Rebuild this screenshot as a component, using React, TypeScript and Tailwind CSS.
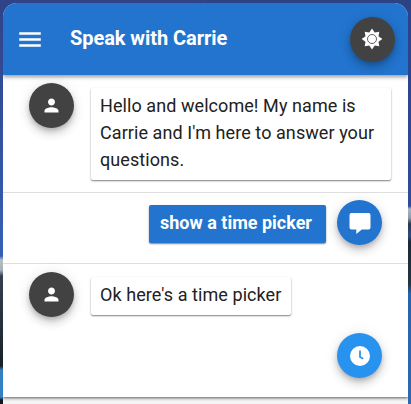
import React from "react";

type AvatarProps = { className: string; children: React.ReactNode };

function Avatar({ className, children }: AvatarProps) {
  return (
    <div
      className={`flex h-[45px] w-[45px] shrink-0 items-center justify-center rounded-full text-white shadow-[0_3px_5px_-1px_rgba(0,0,0,0.2),0_6px_10px_rgba(0,0,0,0.14),0_1px_14px_rgba(0,0,0,0.1)] ${className}`}
    >
      {children}
    </div>
  );
}

function MenuIcon() {
  return (
    <svg viewBox="0 0 22 16" className="h-4 w-[22px]" fill="currentColor">
      <path d="M0.200 1.300h21.600v2.400H0.200zM0.200 7.300h21.600v2.400H0.200zM0.200 13.300h21.600v2.400H0.200z" />
    </svg>
  );
}

function PersonIcon() {
  return (
    <svg viewBox="0 0 24 24" className="h-[21px] w-[21px]" fill="currentColor">
      <path d="M12 12c2.21 0 4-1.79 4-4s-1.79-4-4-4-4 1.79-4 4 1.79 4 4 4zm0 2c-2.67 0-8 1.34-8 4v2h16v-2c0-2.66-5.33-4-8-4z" />
    </svg>
  );
}

function SunIcon() {
  return (
    <svg viewBox="0 0 22 22" className="mr-px h-[22px] w-[22px]" fill="currentColor">
      <path d="M11 .6 13.7 4.500 18.3 3.700 17.500 8.300 21.400 11 17.500 13.700 18.300 18.300 13.700 17.500 11 21.400 8.300 17.500 3.700 18.300 4.500 13.700 .6 11 4.500 8.300 3.700 3.700 8.300 4.500Z" />
      <circle cx="11" cy="11" r="4.500" fill="none" stroke="#424242" strokeWidth="0.850" />
    </svg>
  );
}

function ChatIcon() {
  return (
    <svg viewBox="0 0 22 22" className="h-[22px] w-[22px]" fill="currentColor">
      <path d="M2.5 1h17Q21.500 1 21.500 3v12.500q0 2-2 2H12.800L7.300 22v-4.500H2.500q-2 0-2-2V3q0-2 2-2Z" />
    </svg>
  );
}

function ClockIcon() {
  return (
    <svg viewBox="0 0 20 20" className="h-5 w-5">
      <circle cx="10" cy="10" r="10" fill="white" />
      <path d="M10 4.500V11L13.200 12.800" fill="none" stroke="#2893ee" strokeWidth="1.800" />
    </svg>
  );
}

function Bubble({ className, children }: AvatarProps) {
  return (
    <div
      className={`rounded-[2px] text-[18px] leading-[27px] shadow-[0_1px_2px_rgba(0,0,0,0.4),0_1px_1px_rgba(0,0,0,0.14)] ${className}`}
    >
      {children}
    </div>
  );
}

export default function App() {
  return (
    <div className="flex h-[404px] w-[411px] overflow-hidden bg-[#304e91] bg-[linear-gradient(180deg,#304288_0px,#3560b5_256px,#b5bdc5_260px,#a8b0b8_270px,#35404e_276px,#18202b_366px,#3480c5_370px,#3480c5_397px,#15191f_400px),linear-gradient(180deg,#2b4285_0px,#2c4c99_206px,#a9b6c0_209px,#8c9cab_218px,#26384e_224px,#2e4b85_236px,#1b2936_242px,#233442_284px,#2864ad_294px,#2f67ad_404px)] bg-[length:50%_100%,50%_100%] bg-[position:left,right] bg-no-repeat px-[3px] pt-[3px] font-['Roboto',sans-serif] text-[#212121]">
      <main className="h-[401px] flex-1 overflow-hidden rounded-t-[14px] bg-[#f5f5f5]">
        <header className="relative flex h-[72px] items-center bg-[#2274ce] pr-[13px] pl-4 text-white shadow-[0_2px_4px_rgba(0,0,0,0.4)]">
          <button aria-label="Menu" className="w-[22px]"><MenuIcon /></button>
          <h1 className="ml-[29px] flex-1 pb-[2px] text-[20px] font-bold tracking-[-0.06px]">Speak with Carrie</h1>
          <Avatar className="bg-[#424242]"><SunIcon /></Avatar>
        </header>
        <div className="h-[322px] bg-white shadow-[0_1px_3px_rgba(0,0,0,0.65)]">
          <section className="flex h-[118px] items-start border-b border-[#dedede] pt-2 pl-[26px]">
            <Avatar className="bg-[#424242]"><PersonIcon /></Avatar>
            <Bubble className="mt-[5px] ml-[17px] h-[92px] w-[300px] bg-white pt-[4px] pl-[9px] tracking-[0.07px]">
              Hello and welcome! My name is Carrie and I'm here to answer your questions.
            </Bubble>
          </section>
          <section className="flex h-[71px] items-start justify-end border-b border-[#dedede] pt-[7px] pr-[26px]">
            <Bubble className="mt-[5px] mr-[11px] h-[38px] w-[177px] bg-[#2274ce] pt-[4px] pl-[11px] font-bold whitespace-nowrap text-white">
              show a time picker
            </Bubble>
            <Avatar className="bg-[#2274ce]"><ChatIcon /></Avatar>
          </section>
          <section className="pt-2">
            <div className="flex items-start pl-[26px]">
              <Avatar className="bg-[#424242]"><PersonIcon /></Avatar>
              <Bubble className="mt-[5px] ml-[17px] h-[38px] w-[200px] bg-white pt-[4px] pl-[9px] tracking-[0.07px] whitespace-nowrap">
                Ok here's a time picker
              </Bubble>
            </div>
            <div className="mt-4 flex justify-end pr-[26px]">
              <Avatar className="bg-[#2893ee]"><ClockIcon /></Avatar>
            </div>
          </section>
        </div>
      </main>
    </div>
  );
}
